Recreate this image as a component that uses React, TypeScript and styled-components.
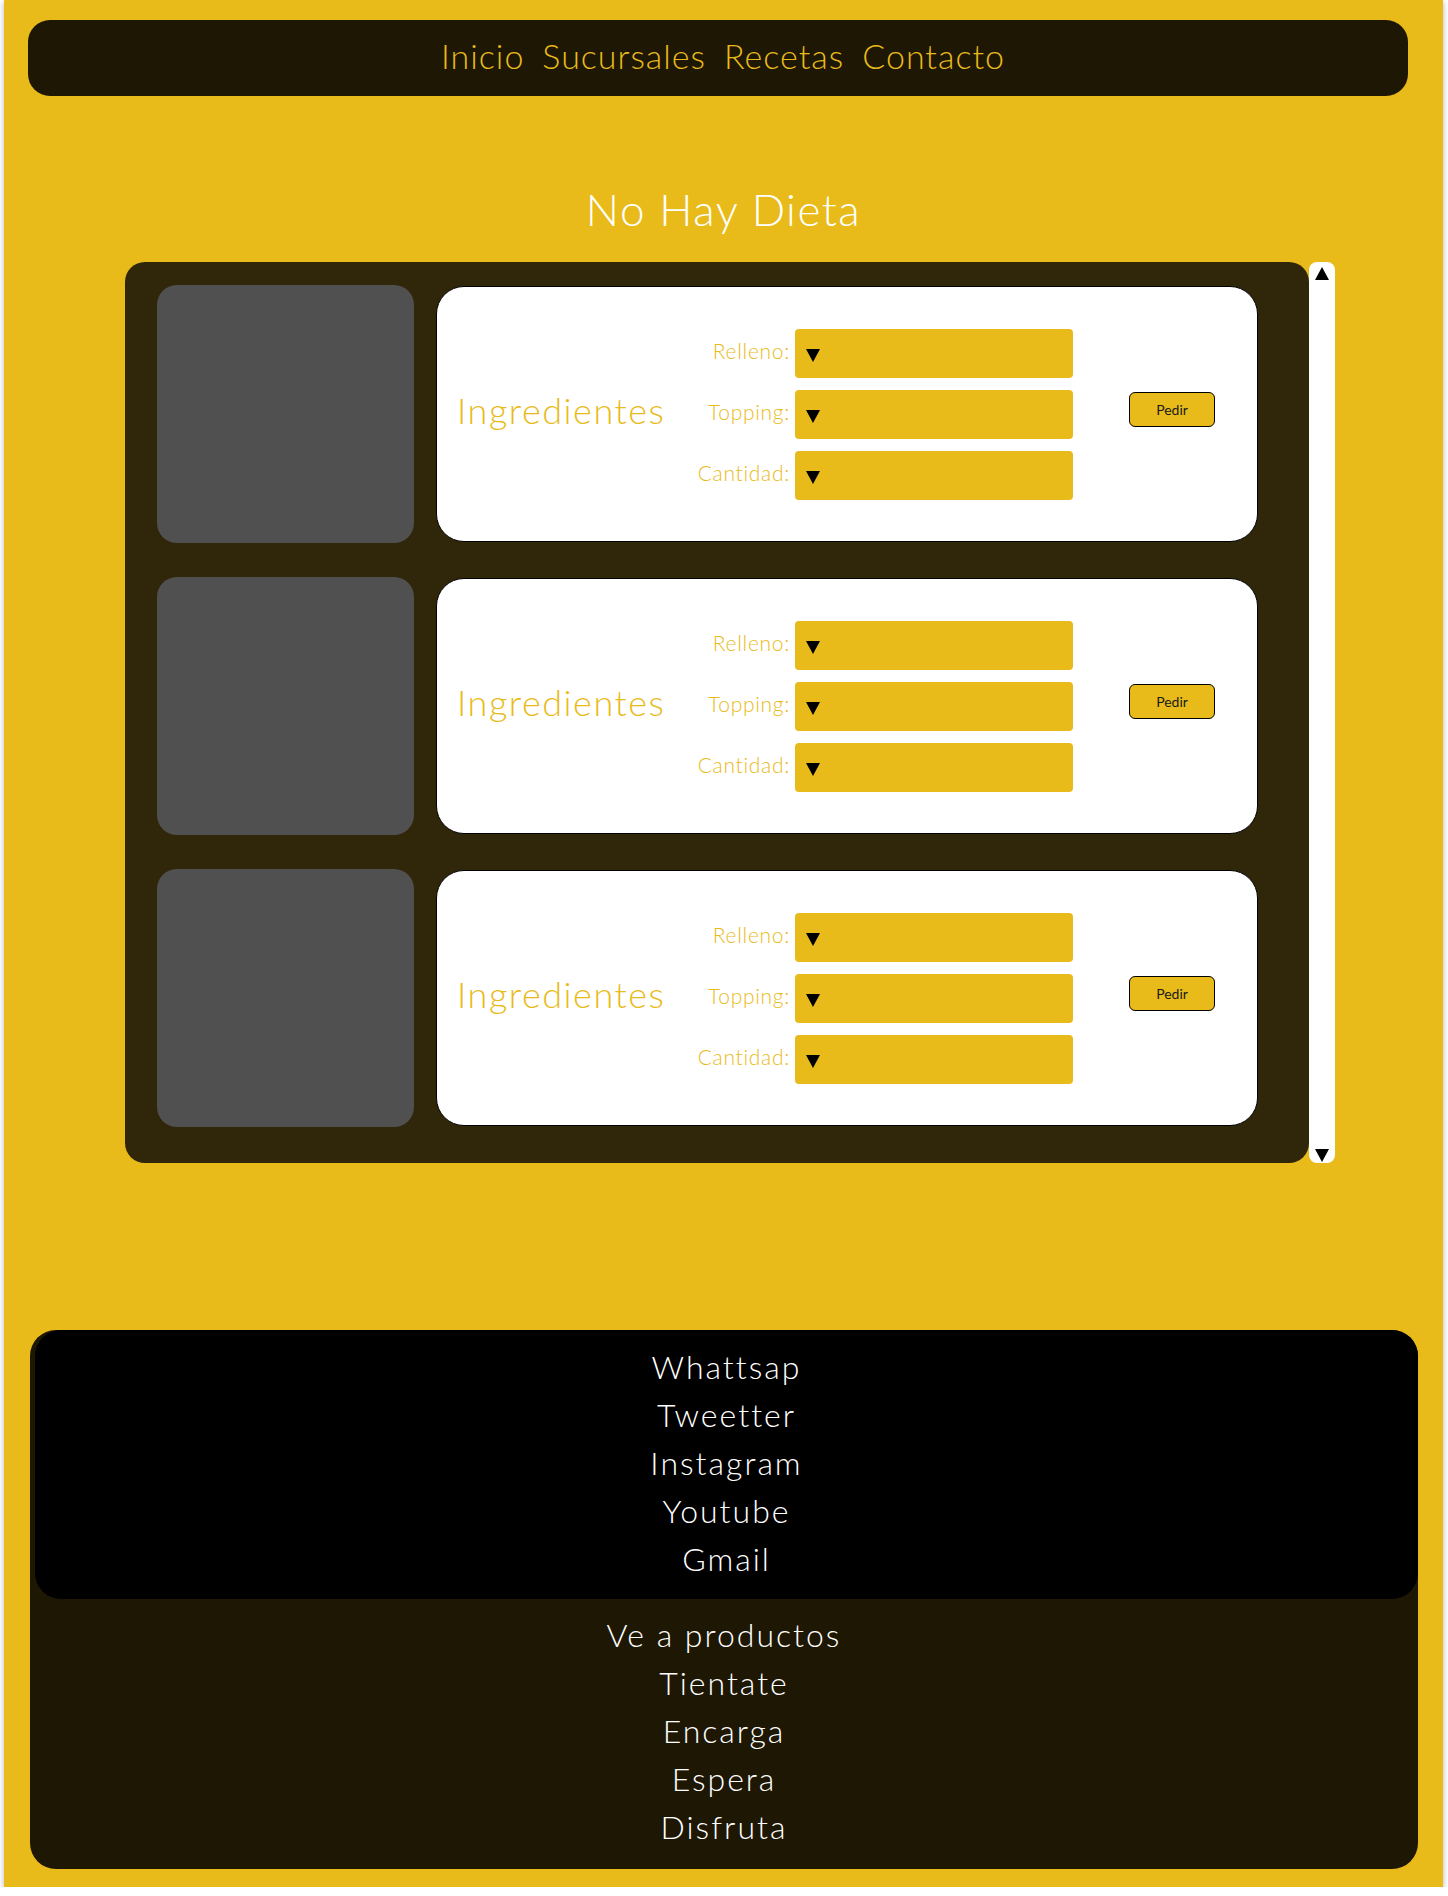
import React from 'react';
import styled, { createGlobalStyle } from 'styled-components';

const yellow = '#E8BB1A';
const navLinks = ['Inicio', 'Sucursales', 'Recetas', 'Contacto'];
const fields = ['Relleno:', 'Topping:', 'Cantidad:'];
const socials = ['Whattsap', 'Tweetter', 'Instagram', 'Youtube', 'Gmail'];
const steps = ['Ve a productos', 'Tientate', 'Encarga', 'Espera', 'Disfruta'];

const GlobalStyle = createGlobalStyle`
  body {
    margin: 0;
    background: #ffffff;
    font-family: Lato, "Open Sans", sans-serif;
    font-weight: 300;
  }
`;

const Page = styled.div`
  width: 1439px;
  margin-left: 4px;
  padding: 20px 0 18px;
  box-sizing: border-box;
  background: ${yellow};
  box-shadow: 0 2px 6px rgba(0, 0, 0, 0.3);
`;

const Nav = styled.nav`
  height: 76px;
  box-sizing: border-box;
  margin: 0 35px 0 24px;
  padding: 0 0 6px 10px;
  background: #1e1704;
  border-radius: 22px;
  display: flex;
  align-items: center;
  justify-content: center;
  gap: 18px;
`;

const NavLink = styled.a`
  color: ${yellow};
  font-size: 34px;
  letter-spacing: 1px;
  text-decoration: none;
`;

const Title = styled.h1`
  margin: 88px 0 28px;
  text-align: center;
  color: #ffffff;
  font-size: 44px;
  font-weight: 300;
  letter-spacing: 1.5px;
  line-height: 50px;
`;

const ScrollArea = styled.div`
  display: flex;
  margin-left: 121px;
  height: 901px;
`;

const Panel = styled.div`
  width: 1184px;
  box-sizing: border-box;
  padding: 23px 51px 0 32px;
  background: #30260a;
  border-radius: 20px;
  display: flex;
  flex-direction: column;
  gap: 34px;
`;

const Row = styled.div`
  display: flex;
  align-items: center;
  gap: 22px;
  height: 258px;
`;

const Thumb = styled.div`
  width: 257px;
  height: 258px;
  background: #505050;
  border-radius: 20px;
`;

const Card = styled.div`
  width: 822px;
  height: 256px;
  box-sizing: border-box;
  padding-left: 20px;
  background: #ffffff;
  border: 1px solid #000000;
  border-radius: 28px;
  display: flex;
  align-items: center;
`;

const Heading = styled.h2`
  width: 226px;
  margin: -8px 0 0;
  color: ${yellow};
  font-size: 36px;
  font-weight: 300;
  letter-spacing: 1.5px;
  white-space: nowrap;
`;

const Form = styled.div`
  display: grid;
  grid-template-columns: 107px 278px;
  column-gap: 5px;
  row-gap: 12px;
  align-items: center;
`;

const Label = styled.label`
  color: ${yellow};
  font-size: 21px;
  letter-spacing: 0.7px;
  text-align: right;
  margin-top: -6px;
`;

const Select = styled.div`
  height: 49px;
  padding-left: 11px;
  background: ${yellow};
  border-radius: 4px;
  display: flex;
  align-items: center;

  &::before {
    content: '';
    margin-top: 4px;
    border-left: 7px solid transparent;
    border-right: 7px solid transparent;
    border-top: 13px solid #000000;
  }
`;

const OrderButton = styled.button`
  width: 86px;
  height: 35px;
  margin: -10px 0 0 56px;
  background: ${yellow};
  border: 1px solid #000000;
  border-radius: 6px;
  color: #1a1a1a;
  font-family: Lato, "Open Sans", sans-serif;
  font-size: 14px;
  cursor: pointer;
`;

const ScrollBar = styled.div`
  width: 26px;
  background: #ffffff;
  border-radius: 8px;
  display: flex;
  flex-direction: column;
  justify-content: space-between;
  align-items: center;
  padding: 5px 0 1px;
  box-sizing: border-box;
`;

const Arrow = styled.span<{ $up?: boolean }>`
  border-left: 7.5px solid transparent;
  border-right: 7.5px solid transparent;
  ${({ $up }) => ($up ? 'border-bottom: 13px solid #000;' : 'border-top: 13px solid #000;')}
`;

const Footer = styled.footer`
  margin: 167px 25px 0 26px;
  height: 539px;
  background: #1e1704;
  border-radius: 26px;
`;

const LinkList = styled.div<{ $dark?: boolean }>`
  display: flex;
  flex-direction: column;
  align-items: center;
  background: ${({ $dark }) => ($dark ? '#000000' : 'transparent')};
  border-radius: 26px;
  padding: ${({ $dark }) => ($dark ? '13px 0 16px' : '12px 0 19px')};
  margin-left: ${({ $dark }) => ($dark ? '5px' : '0')};
`;

const FooterLink = styled.a`
  color: #ffffff;
  font-size: 32px;
  letter-spacing: 2px;
  line-height: 48px;
  text-decoration: none;
`;

const App: React.FC = () => {
  return (
    <>
      <GlobalStyle />
      <Page>
        <Nav>
          {navLinks.map((link) => (
            <NavLink key={link} href="#">{link}</NavLink>
          ))}
        </Nav>
        <Title>No Hay Dieta</Title>
        <ScrollArea>
          <Panel>
            {[0, 1, 2].map((i) => (
              <Row key={i}>
                <Thumb />
                <Card>
                  <Heading>Ingredientes</Heading>
                  <Form>
                    {fields.map((field) => (
                      <React.Fragment key={field}>
                        <Label>{field}</Label>
                        <Select />
                      </React.Fragment>
                    ))}
                  </Form>
                  <OrderButton>Pedir</OrderButton>
                </Card>
              </Row>
            ))}
          </Panel>
          <ScrollBar>
            <Arrow $up />
            <Arrow />
          </ScrollBar>
        </ScrollArea>
        <Footer>
          <LinkList $dark>
            {socials.map((s) => (
              <FooterLink key={s} href="#">{s}</FooterLink>
            ))}
          </LinkList>
          <LinkList>
            {steps.map((s) => (
              <FooterLink key={s} href="#">{s}</FooterLink>
            ))}
          </LinkList>
        </Footer>
      </Page>
    </>
  );
};

export default App;
